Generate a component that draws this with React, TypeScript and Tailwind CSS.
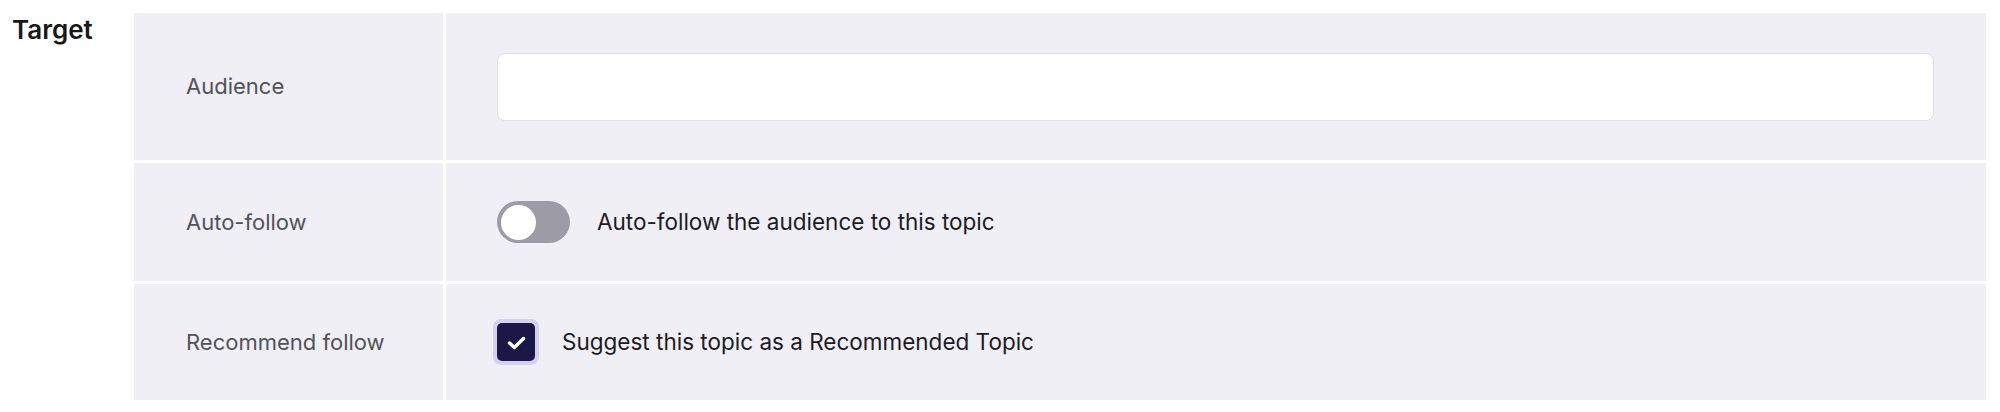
import React from "react";

function Row({ label, height, children }: { label: string; height: string; children: React.ReactNode }) {
  return (
    <div className={`flex gap-[3px] ${height}`}>
      <div className="w-[309px] shrink-0 bg-[#f0eff5] flex items-center pl-[52px] text-[22px] text-[#52525b]">
        {label}
      </div>
      <div className="flex-1 bg-[#f0eff5] flex items-center pl-[51px] pr-[52px]">{children}</div>
    </div>
  );
}

export default function App() {
  return (
    <div
      className="flex bg-white pt-[13px] pr-[14px] w-[2000px] h-[412px]"
      style={{ fontFamily: "Inter, 'Noto Sans', sans-serif" }}
    >
      <div className="w-[134px] shrink-0 pl-[12px]">
        <h2 className="mt-[1px] text-[26px] leading-[31px] font-semibold text-[#18181b]">Target</h2>
      </div>
      <div className="flex-1 flex flex-col gap-[3px] h-[387px]">
        <Row label="Audience" height="h-[147px]">
          <div className="w-full h-[68px] bg-white rounded-[8px] border border-[#e0dfe8]" />
        </Row>
        <Row label="Auto-follow" height="h-[118px]">
          <div className="flex items-center gap-[27px]">
            <div className="w-[73px] h-[42px] rounded-full bg-[#9d9ba6] flex items-center px-[3.5px]">
              <div className="w-[35px] h-[35px] rounded-full bg-white" />
            </div>
            <span className="text-[22.5px] text-[#1c1b26]">Auto-follow the audience to this topic</span>
          </div>
        </Row>
        <Row label="Recommend follow" height="h-[116px]">
          <div className="flex items-center gap-[23px] -ml-[4px]">
            <div className="w-[46px] h-[46px] rounded-[8px] bg-[#d5d1f1] flex items-center justify-center">
              <div className="w-[38px] h-[38px] rounded-[5px] bg-[#1b1846] flex items-center justify-center">
                <svg width="21" height="18" viewBox="0 0 21 18" fill="none" className="mt-[2px]">
                  <path d="M3.5 9l4.8 4.5L17.5 4.5" stroke="white" strokeWidth="3.4" strokeLinecap="round" strokeLinejoin="round" />
                </svg>
              </div>
            </div>
            <span className="text-[22.5px] text-[#1c1b26]">Suggest this topic as a Recommended Topic</span>
          </div>
        </Row>
      </div>
    </div>
  );
}
